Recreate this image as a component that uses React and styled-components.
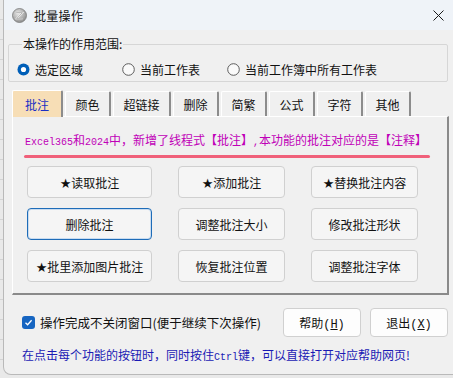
import React from "react";
import styled, { createGlobalStyle } from "styled-components";

const Global = createGlobalStyle`
  html, body { margin: 0; padding: 0; }
  body { font-family: "Noto Sans CJK SC", "Liberation Sans", sans-serif; }
`;

const Desk = styled.div`
  width: 453px;
  height: 378px;
  overflow: hidden;
  background-color: #e9e9e9;
  background-image: repeating-linear-gradient(
    to bottom,
    transparent 0px,
    transparent 19px,
    #d4d4d4 19px,
    #d4d4d4 20px
  );
  position: relative;
`;

const Window = styled.div`
  margin-left: 3px;
  width: 470px;
  height: 375px;
  box-sizing: border-box;
  background: #f0f0f0;
  border: 1px solid #b9b9b9;
  border-top: none;
  border-radius: 0 0 8px 8px;
  overflow: hidden;
  display: flex;
  flex-direction: column;
  font-size: 12px;
  color: #111;
`;

const TitleBar = styled.div`
  height: 30px;
  flex: none;
  display: flex;
  align-items: center;
  background: #eff3f8;
  padding-left: 8px;
  width: 449px;
  box-sizing: border-box;
`;

const TitleText = styled.span`
  margin-left: 7px;
  font-size: 12px;
  letter-spacing: 0.3px;
  flex: 1;
`;

const CloseBtn = styled.div`
  width: 30px;
  display: flex;
  justify-content: center;
  align-items: center;
`;

const Scope = styled.fieldset`
  margin: 6px 0 0 4px;
  width: 440px;
  box-sizing: border-box;
  padding: 7px 8px 2px 8px;
  border: 1px solid #d6d6d6;
  border-radius: 2px;
  min-width: 0;
`;

const ScopeLegend = styled.legend`
  padding: 0 1px;
  margin-left: 5px;
  font-size: 12px;
  line-height: 16px;
`;

const RadioRow = styled.div`
  display: grid;
  grid-template-columns: 105px 105px auto;
  height: 20px;
  align-items: center;
`;

const RadioItem = styled.label`
  display: flex;
  align-items: center;
  gap: 5px;
  white-space: nowrap;
  font-size: 12px;
`;

const Tabs = styled.div`
  margin: 7px 0 0 8px;
  display: flex;
  align-items: flex-end;
  height: 27px;
  gap: 1px;
`;

const Tab = styled.div`
  height: ${(p) => (p.$active ? 27 : 25)}px;
  box-sizing: border-box;
  padding: 0 ${(p) => (p.$active ? 12 : 9.5)}px;
  display: flex;
  align-items: center;
  font-size: 12px;
  background: ${(p) => (p.$active ? "#f7deb6" : "#f0f0f0")};
  color: ${(p) => (p.$active ? "#1b2fc4" : "#111")};
  border-left: 1px solid #ffffff;
  border-top: 1px solid #ffffff;
  border-right: 2px solid #8c8c8c;
  border-radius: 2px 2px 0 0;
  margin-right: 1px;
  position: relative;
  z-index: ${(p) => (p.$active ? 2 : 1)};
  margin-bottom: ${(p) => (p.$active ? -1 : 0)}px;
`;

const Panel = styled.div`
  margin-left: 8px;
  width: 437px;
  height: 179px;
  box-sizing: border-box;
  border-left: 1px solid #ffffff;
  border-top: 1px solid #ffffff;
  border-right: 2px solid #8a8a8a;
  border-bottom: 2px solid #8a8a8a;
  padding: 16px 0 0 12px;
  display: flex;
  flex-direction: column;
`;

const Notice = styled.div`
  color: #c000b8;
  font-size: 12px;
  line-height: 14px;
  white-space: nowrap;
  font-family: "Noto Sans CJK SC", sans-serif;
`;

const Latin = styled.span`
  font-family: "Liberation Mono", monospace;
  font-size: 10px;
`;

const Underline = styled.div`
  margin: 5px 0 0 -1px;
  width: 406px;
  height: 3px;
  border-radius: 2px;
  background: #f0607a;
`;

const ButtonGrid = styled.div`
  margin: 8px 0 0 2px;
  display: grid;
  grid-template-columns: 125px 107px 107px;
  grid-auto-rows: 32px;
  column-gap: 26px;
  row-gap: 10px;
`;

const ActionBtn = styled.button`
  font-family: "Noto Sans CJK SC", sans-serif;
  font-size: 12px;
  color: #111;
  background: #f5f5f5;
  border: 1px solid ${(p) => (p.$focus ? "#1e6cb8" : "#d0d0d0")};
  border-radius: 4px;
  padding: 0;
  white-space: nowrap;
  box-shadow: ${(p) => (p.$focus ? "inset 0 0 0 1px #c9dcf0" : "none")};
`;

const Star = styled.span`
  font-size: 13px;
  font-family: "DejaVu Sans", sans-serif;
`;

const BottomRow = styled.div`
  margin: 13px 0 0 18px;
  width: 426px;
  height: 29px;
  display: flex;
  align-items: center;
`;

const CheckLabel = styled.label`
  flex: 1;
  display: flex;
  align-items: center;
  gap: 5px;
  font-size: 12.5px;
  white-space: nowrap;
`;

const Box = styled.span`
  width: 13px;
  height: 13px;
  border-radius: 3px;
  background: #1665c1;
  display: flex;
  align-items: center;
  justify-content: center;
`;

const DlgBtn = styled.button`
  width: 78px;
  height: 29px;
  margin-left: 9px;
  background: #fdfdfd;
  border: 1px solid #d0d0d0;
  border-radius: 4px;
  font-family: "Noto Sans CJK SC", sans-serif;
  font-size: 12px;
  color: #111;
  padding: 0;
`;

const U = styled.span`
  font-family: "Liberation Mono", monospace;
  text-decoration: underline;
`;

const Paren = styled.span`
  font-family: "Liberation Mono", monospace;
`;

const Hint = styled.div`
  margin: 11px 0 0 18px;
  color: #1a1ab4;
  font-size: 12px;
  line-height: 14px;
  white-space: nowrap;
`;

function AppIcon() {
  return (
    <svg width="15" height="15" viewBox="0 0 15 15">
      <defs>
        <radialGradient id="g" cx="0.4" cy="0.35" r="0.7">
          <stop offset="0" stopColor="#e8e8e8" />
          <stop offset="1" stopColor="#8a8a8a" />
        </radialGradient>
      </defs>
      <circle cx="7.5" cy="7.5" r="7" fill="url(#g)" stroke="#7a7a7a" strokeWidth="0.8" />
      <path d="M4.2 4.6 H10.4 L4.6 10.6 H10.8" fill="none" stroke="#ffffff" strokeWidth="1.4" />
      <path d="M4.2 4.6 H10.4 L4.6 10.6 H10.8" fill="none" stroke="#6a6a6a" strokeWidth="0.5" />
    </svg>
  );
}

function Radio({ on }) {
  return (
    <svg width="13" height="13" viewBox="0 0 13 13">
      {on ? (
        <>
          <circle cx="6.5" cy="6.5" r="6" fill="#005fb8" />
          <circle cx="6.5" cy="6.5" r="2.6" fill="#ffffff" />
        </>
      ) : (
        <circle cx="6.5" cy="6.5" r="5.8" fill="#fafafa" stroke="#5c5c5c" strokeWidth="1" />
      )}
    </svg>
  );
}

const tabs = ["批注", "颜色", "超链接", "删除", "简繁", "公式", "字符", "其他"];

const buttons = [
  { t: "读取批注", star: true },
  { t: "添加批注", star: true },
  { t: "替换批注内容", star: true },
  { t: "删除批注", focus: true },
  { t: "调整批注大小" },
  { t: "修改批注形状" },
  { t: "批里添加图片批注", star: true },
  { t: "恢复批注位置" },
  { t: "调整批注字体" },
];

export default function App() {
  return (
    <Desk>
      <Global />
      <Window>
        <TitleBar>
          <AppIcon />
          <TitleText>批量操作</TitleText>
          <CloseBtn>
            <svg width="11" height="11" viewBox="0 0 11 11">
              <path d="M0.5 0.5 L10.5 10.5 M10.5 0.5 L0.5 10.5" stroke="#1a1a1a" strokeWidth="1" />
            </svg>
          </CloseBtn>
        </TitleBar>

        <Scope>
          <ScopeLegend>本操作的作用范围:</ScopeLegend>
          <RadioRow>
            <RadioItem><Radio on />选定区域</RadioItem>
            <RadioItem><Radio />当前工作表</RadioItem>
            <RadioItem><Radio />当前工作簿中所有工作表</RadioItem>
          </RadioRow>
        </Scope>

        <Tabs>
          {tabs.map((t, i) => (
            <Tab key={t} $active={i === 0}>{t}</Tab>
          ))}
        </Tabs>
        <Panel>
          <Notice>
            <Latin>Excel365</Latin>和<Latin>2024</Latin>中，新增了线程式【批注】<Latin>,</Latin>本功能的批注对应的是【注释】
          </Notice>
          <Underline />
          <ButtonGrid>
            {buttons.map((b) => (
              <ActionBtn key={b.t} $focus={b.focus}>
                {b.star && <Star>★</Star>}
                {b.t}
              </ActionBtn>
            ))}
          </ButtonGrid>
        </Panel>

        <BottomRow>
          <CheckLabel>
            <Box>
              <svg width="9" height="9" viewBox="0 0 9 9">
                <path d="M1.5 4.7 L3.6 6.7 L7.6 2.3" fill="none" stroke="#fff" strokeWidth="1.3" />
              </svg>
            </Box>
            操作完成不关闭窗口(便于继续下次操作)
          </CheckLabel>
          <DlgBtn>帮助<Paren>(<U>H</U>)</Paren></DlgBtn>
          <DlgBtn>退出<Paren>(<U>X</U>)</Paren></DlgBtn>
        </BottomRow>
        <Hint>在点击每个功能的按钮时，同时按住<Latin>Ctrl</Latin>键，可以直接打开对应帮助网页!</Hint>
      </Window>
    </Desk>
  );
}
